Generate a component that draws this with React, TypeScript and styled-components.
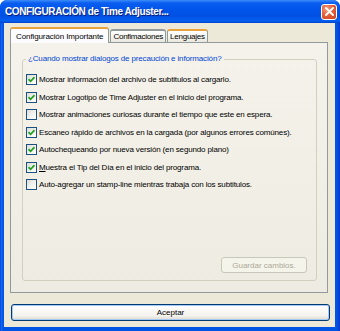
import styled, { createGlobalStyle } from "styled-components";
import type { ReactNode } from "react";

const GlobalStyle = createGlobalStyle`
  html, body {
    margin: 0;
    padding: 0;
    background: #ffffff;
  }
  body {
    font-family: "Liberation Sans", Arial, sans-serif;
  }
`;

type Option = { label: ReactNode; checked: boolean };

const options: Option[] = [
  { label: "Mostrar información del archivo de subtitulos al cargarlo.", checked: true },
  { label: "Mostrar Logotipo de Time Adjuster en el inicio del programa.", checked: true },
  { label: "Mostrar animaciones curiosas durante el tiempo que este en espera.", checked: false },
  { label: "Escaneo rápido de archivos en la cargada (por algunos errores comúnes).", checked: true },
  { label: "Autochequeando por nueva versión (en segundo plano)", checked: true },
  {
    label: (
      <>
        <u>M</u>uestra el Tip del Día en el inicio del programa.
      </>
    ),
    checked: true,
  },
  { label: "Auto-agregar un stamp-line mientras trabaja con los subtitulos.", checked: false },
];

const tabs = [
  { label: "Configuración Importante", active: true, hot: false },
  { label: "Confimaciones", active: false, hot: false },
  { label: "Lenguajes", active: false, hot: true },
];

export default function App() {
  return (
    <>
      <GlobalStyle />
      <Window>
        <TitleBar>
          <Title>CONFIGURACIÓN de Time Adjuster...</Title>
          <CloseButton>
            <svg width="9" height="9" viewBox="0 0 9 9">
              <path d="M1 1 L8 8 M8 1 L1 8" stroke="#fff" strokeWidth="1.8" strokeLinecap="round" />
            </svg>
          </CloseButton>
        </TitleBar>

        <Body>
          <TabList>
            {tabs.map((t) => (
              <Tab key={t.label} $active={t.active} $hot={t.hot}>
                {t.label}
              </Tab>
            ))}
          </TabList>

          <Panel>
            <Group>
              <Legend>¿Cuando mostrar dialogos de precaución e información?</Legend>
              {options.map((o, i) => (
                <Row key={i}>
                  <Check $checked={o.checked}>
                    {o.checked && (
                      <svg width="7" height="7" viewBox="0 0 7 7">
                        <path d="M0.5 3.2 L2.6 5.3 L6.5 1.2" fill="none" stroke="#21a121" strokeWidth="1.7" />
                      </svg>
                    )}
                  </Check>
                  <Label>{o.label}</Label>
                </Row>
              ))}
              <Spacer />
              <SaveButton disabled>Guardar cambios.</SaveButton>
            </Group>
          </Panel>

          <OkButton>Aceptar</OkButton>
        </Body>
      </Window>
    </>
  );
}

const Window = styled.div`
  width: 340px;
  height: 331px;
  display: flex;
  flex-direction: column;
  background: linear-gradient(90deg, #0831d9 0, #166aee 1px, #0055e5 3px, #0055e5 calc(100% - 3px), #0a36c9 100%);
  border-radius: 7px 7px 0 0;
  overflow: hidden;
`;

const TitleBar = styled.div`
  height: 23px;
  flex: none;
  display: flex;
  align-items: center;
  justify-content: space-between;
  padding: 0 2px 0 5px;
  background: linear-gradient(
    #3c8cf8 0,
    #0a5ef0 3px,
    #0155ea 9px,
    #0150e4 16px,
    #0560ef 21px,
    #0040cc 23px
  );
`;

const Title = styled.span`
  color: #ffffff;
  font-weight: bold;
  font-size: 10px;
  letter-spacing: -0.4px;
  text-shadow: 1px 1px 0 #0a1e7a;
  white-space: nowrap;
`;

const CloseButton = styled.div`
  width: 14px;
  height: 14px;
  margin-right: 1px;
  display: flex;
  align-items: center;
  justify-content: center;
  border: 1px solid #ffffff;
  border-radius: 3px;
  background: radial-gradient(circle at 35% 30%, #f4a080 0, #e3603a 45%, #c9431c 100%);
`;

const Body = styled.div`
  flex: 1;
  margin: 0 5px 4px 4px;
  padding: 4px 0 6px 6px;
  display: flex;
  flex-direction: column;
  background: #ece9d8;
`;

const TabList = styled.div`
  height: 16px;
  margin-bottom: -1px;
  display: flex;
  align-items: flex-end;
`;

const Tab = styled.div<{ $active?: boolean; $hot?: boolean }>`
  position: relative;
  z-index: ${(p) => (p.$active ? 1 : 0)};
  box-sizing: border-box;
  height: ${(p) => (p.$active ? 16 : 13)}px;
  margin-bottom: ${(p) => (p.$active ? 0 : 1)}px;
  margin-left: ${(p) => (p.$active ? 0 : 1)}px;
  padding: 0 ${(p) => (p.$active ? 5 : 2)}px;
  display: flex;
  align-items: center;
  font-size: 8px;
  letter-spacing: ${(p) => (p.$active ? -0.1 : -0.25)}px;
  color: #000000;
  white-space: nowrap;
  border: 1px solid #919b9c;
  border-bottom: none;
  border-top: 2px solid ${(p) => (p.$active || p.$hot ? "#e8a33c" : "#919b9c")};
  border-radius: 3px 3px 0 0;
  background: ${(p) =>
    p.$active ? "#fcfcfe" : "linear-gradient(#fefefe, #f4f3ee 60%, #e8e6dc)"};
`;

const Panel = styled.div`
  width: 318px;
  height: 251px;
  box-sizing: border-box;
  padding: 11px 10px 11px 11px;
  display: flex;
  border: 1px solid #919b9c;
  background: linear-gradient(#f4f2ea, #eeece2);
`;

const Group = styled.fieldset`
  flex: 1;
  margin: 0;
  padding: 10px 9px 7px 3px;
  min-width: 0;
  display: flex;
  flex-direction: column;
  gap: 6.5px;
  border: 1px solid #d0d0bf;
  border-radius: 3px;
`;

const Legend = styled.legend`
  padding: 0 2px;
  font-size: 8px;
  line-height: 10px;
  letter-spacing: -0.15px;
  color: #0046d5;
`;

const Row = styled.div`
  height: 11px;
  display: flex;
  align-items: center;
  gap: 2px;
`;

const Check = styled.span<{ $checked?: boolean }>`
  width: 11px;
  height: 11px;
  flex: none;
  box-sizing: border-box;
  display: flex;
  align-items: center;
  justify-content: center;
  border: 1px solid #1c5180;
  background: linear-gradient(135deg, #dcdcd7 0, #f2f2ee 55%, #ffffff 100%);
`;

const Label = styled.span`
  font-size: 8px;
  letter-spacing: -0.15px;
  color: #000000;
  white-space: nowrap;
`;

const Spacer = styled.div`
  flex: 1;
`;

const SaveButton = styled.button`
  align-self: flex-end;
  width: 86px;
  height: 16px;
  padding: 0;
  font-family: inherit;
  font-size: 8px;
  color: #aca899;
  border: 1px solid #c9c7ba;
  border-radius: 3px;
  background: #f5f4ea;
`;

const OkButton = styled.button`
  width: 319px;
  height: 17px;
  margin: 11px 0 0 1px;
  padding: 0;
  font-family: inherit;
  font-size: 8px;
  color: #000000;
  border: 1px solid #003c74;
  border-radius: 3px;
  box-shadow: inset 0 0 0 1px #a6c8f5;
  background: linear-gradient(#ffffff, #f4f3ee 70%, #dcdad0);
`;
